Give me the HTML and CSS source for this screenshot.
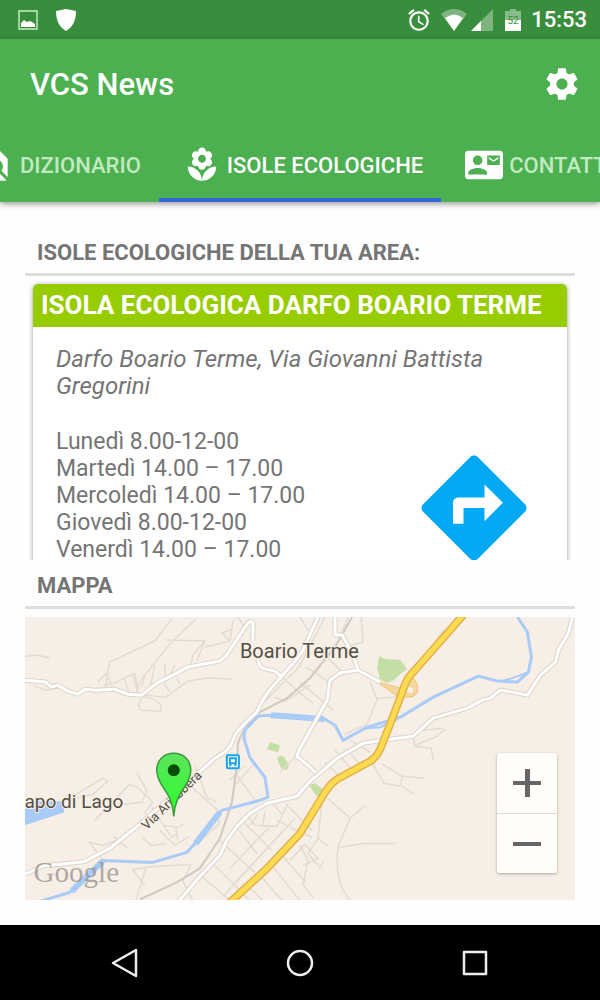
FILE: index.html
```html
<!DOCTYPE html>
<html lang="it">
<head>
    <meta charset="UTF-8">
    <meta name="viewport" content="width=device-width, initial-scale=1">
    <title>VCS News</title>
    <link rel="stylesheet" href="styles.css">
</head>
<body>
    <div class="status-bar">
        <svg class="status-icon" viewBox="0 0 22 22">
            <path d="M2 2h18v18H2z" fill="none" stroke="#c8f0c4" stroke-width="1.4"/>
            <path d="M4 18v-4l3-3 3 2 3-1 2 1 3 2v3z"/>
        </svg>
        <svg class="status-icon shield" viewBox="0 0 22 22">
            <path d="M11 0l10 2c0 9-3 16-10 20C4 18 1 11 1 2z"/>
        </svg>
        <span class="spacer"></span>
        <svg class="status-icon alarm" viewBox="0 0 24 24">
            <path d="M22 5.72l-4.6-3.86-1.29 1.53 4.6 3.86L22 5.72zM7.88 3.39L6.6 1.86 2 5.71l1.29 1.53 4.59-3.85zM12.5 8H11v6l4.75 2.85.75-1.23-4-2.37V8zM12 4c-4.97 0-9 4.03-9 9s4.02 9 9 9c4.97 0 9-4.03 9-9s-4.03-9-9-9zm0 16c-3.87 0-7-3.13-7-7s3.13-7 7-7 7 3.13 7 7-3.13 7-7 7z"/>
        </svg>
        <svg class="status-icon wifi" viewBox="0 0 26 22">
            <path d="M0 5Q13-5 26 5L13 22z" opacity=".35"/>
            <path d="M4 9Q13 2 22 9L13 22z"/>
        </svg>
        <svg class="status-icon" viewBox="0 0 22 22">
            <path d="M22 0v22H0z" opacity=".35"/>
            <path d="M10 12v10H0z"/>
        </svg>
        <svg class="status-icon battery" viewBox="0 0 16 22">
            <path d="M5 0h6v2h5v9H0V2h5z" opacity=".4"/>
            <path d="M0 11h16v11H0z"/>
            <text x="8" y="15" text-anchor="middle">52</text>
        </svg>
        <span class="clock">15:53</span>
    </div>

    <header class="toolbar">
        <div class="app-bar">
            <h1>VCS News</h1>
            <button class="settings" aria-label="Impostazioni">
                <svg viewBox="0 0 24 24">
                    <path d="M19.43 12.98c.04-.32.07-.64.07-.98s-.03-.66-.07-.98l2.11-1.65c.19-.15.24-.42.12-.64l-2-3.46c-.12-.22-.39-.3-.61-.22l-2.49 1c-.52-.4-1.08-.73-1.69-.98l-.38-2.65C14.46 2.18 14.25 2 14 2h-4c-.25 0-.46.18-.49.42l-.38 2.65c-.61.25-1.17.59-1.69.98l-2.49-1c-.23-.09-.49 0-.61.22l-2 3.46c-.13.22-.07.49.12.64l2.11 1.65c-.04.32-.07.65-.07.98s.03.66.07.98l-2.11 1.65c-.19.15-.24.42-.12.64l2 3.46c.12.22.39.3.61.22l2.49-1c.52.4 1.08.73 1.69.98l.38 2.65c.03.24.24.42.49.42h4c.25 0 .46-.18.49-.42l.38-2.65c.61-.25 1.17-.59 1.69-.98l2.49 1c.23.09.49 0 .61-.22l2-3.46c.12-.22.07-.49-.12-.64l-2.11-1.65zM12 15.5c-1.93 0-3.5-1.57-3.5-3.5s1.57-3.5 3.5-3.5 3.5 1.57 3.5 3.5-1.57 3.5-3.5 3.5z"/>
                </svg>
            </button>
        </div>
        <nav class="tabs">
            <a class="tab tab-prev" href="#dizionario">
                <svg viewBox="0 0 24 24">
                    <path d="M20 19.59V8l-6-6H6c-1.1 0-1.99.9-1.99 2L4 20c0 1.1.89 2 1.99 2H18c.45 0 .85-.15 1.19-.4l-4.43-4.43c-.8.52-1.74.83-2.76.83-2.76 0-5-2.24-5-5s2.24-5 5-5 5 2.24 5 5c0 1.02-.31 1.96-.83 2.75L20 19.59zM9 13c0 1.66 1.34 3 3 3s3-1.34 3-3-1.34-3-3-3-3 1.34-3 3z"/>
                </svg>
                <span>DIZIONARIO</span>
            </a>
            <a class="tab active" href="#isole">
                <svg viewBox="0 0 24 24">
                    <path d="M12 22c4.97 0 9-4.03 9-9-4.97 0-9 4.03-9 9zM5.6 10.25c0 1.38 1.12 2.5 2.5 2.5.53 0 1.01-.16 1.42-.44l-.02.19c0 1.38 1.12 2.5 2.5 2.5s2.5-1.12 2.5-2.5l-.02-.19c.4.28.89.44 1.42.44 1.38 0 2.5-1.12 2.5-2.5 0-1-.59-1.85-1.43-2.25.84-.4 1.43-1.25 1.43-2.25 0-1.38-1.12-2.5-2.5-2.5-.53 0-1.01.16-1.42.44l.02-.19C14.5 2.12 13.38 1 12 1S9.5 2.12 9.5 3.5l.02.19c-.4-.28-.89-.44-1.42-.44-1.38 0-2.5 1.12-2.5 2.5 0 1 .59 1.85 1.43 2.25-.84.4-1.43 1.25-1.43 2.25zM12 5.5c1.38 0 2.5 1.12 2.5 2.5s-1.12 2.5-2.5 2.5S9.5 9.38 9.5 8s1.12-2.5 2.5-2.5zM3 13c0 4.97 4.03 9 9 9 0-4.97-4.03-9-9-9z"/>
                </svg>
                <span>ISOLE ECOLOGICHE</span>
            </a>
            <a class="tab tab-next" href="#contatti">
                <svg viewBox="0 0 24 24">
                    <path d="M21 8V7l-3 2-3-2v1l3 2 3-2zm1-5H2C.9 3 0 3.9 0 5v14c0 1.1.9 2 2 2h20c1.1 0 1.99-.9 1.99-2L24 5c0-1.1-.9-2-2-2zM8 6c1.66 0 3 1.34 3 3s-1.34 3-3 3-3-1.34-3-3 1.34-3 3-3zm6 12H2v-1c0-2 4-3.1 6-3.1s6 1.1 6 3.1v1zm8-6h-8V6h8v6z"/>
                </svg>
                <span>CONTATTI</span>
            </a>
        </nav>
    </header>

    <main>
        <h2>ISOLE ECOLOGICHE DELLA TUA AREA:</h2>
        <section class="list">
            <article class="card">
                <h3>ISOLA ECOLOGICA DARFO BOARIO TERME</h3>
                <div class="card-body">
                    <address>Darfo Boario Terme, Via Giovanni Battista Gregorini</address>
                    <ul class="hours">
                        <li>Lunedì 8.00-12-00</li>
                        <li>Martedì 14.00 – 17.00</li>
                        <li>Mercoledì 14.00 – 17.00</li>
                        <li>Giovedì 8.00-12-00</li>
                        <li>Venerdì 14.00 – 17.00</li>
                    </ul>
                    <button class="directions" aria-label="Indicazioni">
                        <svg viewBox="0 0 24 24">
                            <path d="M21.71 11.29l-9-9c-.39-.39-1.02-.39-1.41 0l-9 9c-.39.39-.39 1.02 0 1.41l9 9c.39.39 1.02.39 1.41 0l9-9c.39-.38.39-1.01 0-1.41zM14 14.5V12h-4v3H8v-4c0-.55.45-1 1-1h5V7.5l3.5 3.5-3.5 3.5z"/>
                        </svg>
                    </button>
                </div>
            </article>
        </section>

        <h2>MAPPA</h2>
        <section class="map">
            <svg class="map-canvas" viewBox="25 617 550 283" preserveAspectRatio="xMidYMid slice">
                <defs>
                    <linearGradient id="pin" x1="0" y1="0" x2="0" y2="1">
                        <stop offset="0" stop-color="#5ee35e"/>
                        <stop offset="1" stop-color="#2bff2b"/>
                    </linearGradient>
                    <!-- main roads, stroked twice: casing then fill -->
                    <g id="roads">
                        <path d="M25 680l10 1 11 1 6 5 6-2 5 3 5 3 10 3 8-5 9 1 20-1 13 5 14 1 15-12 18-9 13-7 32-6 6-5 10-15 12-18q3-3 5 0v18M258 660q2 9 8 9l9 2 7 6"/>
                        <path d="M318 617l-15 33-7 10-15 17-13 15-8 13-3 7-11 10-10 11-5 12-6 7-10 6-10 9-65 57-30 24-25 13-25 3-15 1-20 9"/>
                        <path d="M335 617v18h7l10 18 6 17 22 12M358 670l-18 3-10 7-3 20-14 25-13 23-3 8 12 10 6 6"/>
                        <path d="M572 617l-4 16-10 17-3 12-15 13-13 20-15-3-12-2-10 8-8 2-15 8-34 10-20 18-30 4-20 3-26 15-22 19-5 4-13 15-30 7-17 10-13 13-10 14-7 15-20 21-23 27"/>
                    </g>
                    <path id="highway" d="M463 615l-50 57q-6 6-8 12l-15 40-8 20q-4 12-12 17l-33 18q-7 5-12 13l-25 41-33 35-37 34"/>
                </defs>
                <rect x="25" y="617" width="550" height="283" fill="#f7eee6"/>
                <g fill="#c3dfa5">
                    <path d="M379 656l6 3 15 1 7 9-7 5-6 6-8 3-6-4-3-11z"/>
                    <path d="M270 742l10 3-2 7-11-3zM277 758q4-5 8 0l4 7-2 5-6-2z"/>
                    <path d="M309 785l6-2 8 6-3 8-5-3z"/>
                </g>
                <path d="M25 810l8-9h29l3 11-40 13z" fill="#a9cbf8"/>
                <g class="minor">
                    <path d="M172 619l-17 22-45 21-5 28M196 619l-25 24-30 37-5 14M25 657q10-4 25 1M167 640l38 1-12 14-3 13M205 641l-8 20M205 647l25-6 3-20M230 641l-8-8 10-4M98 682l8-8 5 8-10 8M110 685l25-12 3 15M125 679l4 13M133 675l5 17M145 675l-3 12M155 665l-4 20M165 665v18M175 665l-5 10M136 694l30 3 22-16 20-3 24 1M142 698q-5 8-1 12l20 1q2-8-7-12l-12-3M165 684l5 8M177 678l3 6M35 686l12 4 12-2M238 617l7 11M300 617l8 13M325 617l-26 50-38 38M348 617l-10 25-36 45M361 617l2 25-13 4M280 675l20 18 13 10M300 682l33 28M306 667l26 17M320 650l23 23M275 697l10 4 25-16M370 682l7 17-10 25-23 10M377 698l18-1M413 738l2 8 16 2 2 12M415 745l20-8 10-8M422 730l20-2M433 645l8-12 12-9"/>
                    <path d="M75 795l28-17 5 3-15 13-15 4M95 820l35-36 8 3 15 15-9 12M137 772l10 18-5 12-18 2M152 807l20 30 5-4M160 830l15 15 14-9M165 825l11 2 2 12M175 828l10-5M167 843l-15 2-10-8M105 862l-15-20 14 3 20-8M128 848l-14-12M145 885l-12-16 20-3 38-2M136 900l10-32M191 865l-8 15 10 20M190 785l28 25 1 14-31 27M195 765l12 32 10 5M235 785l18-20M255 800l-20-28M245 765l-15 15M270 800l12 14M248 815l7 10 22 1 11-23M235 825l22 28M220 840l35 32M212 862l37 37M200 874l30 26M245 823l27 27M258 814l-8 11M265 811l-2 14M277 820l35 17M287 805l25 25M270 826l-40 42M282 832l-45 48M295 818l-72 78M300 752l-20 20M345 748l17 18M335 750l17 20M325 762l14 13M370 752l-20-12"/>
                    <path d="M372 763l12 20 16 3 2-10-20-12M402 776l22 2M402 786l12 8M328 798l22 20 15-13M350 818l-12 28q-3 25 4 42l8 12M338 847l26-4h31M322 800l-4 38 10 8M318 838l-10 15 12 14 4-6M312 837l-20-8M300 845l8 15-5 24 10 13M290 860l15-16 13 14-15 7M260 875l22 25M272 865l28 35M282 855l24 27M250 887l13 13"/>
                </g>
                <path d="M352 617l-17 30-25 31-23 20-27 14q-18 16-22 32l-1 21-5 37-12 36-20 30-23 14-37 17" fill="none" stroke="#d0c8c2" stroke-width="2"/>
                <path class="river" d="M517 617l10 15 4 25-3 15-11 10-20-1-19-5-45 21-33 20-33 10-24 13-8-15-10-6-25-2-33-2-9 1-13 14-1 8 6 19 2 3 13 17 3 20-8 3-38 10-20 25-15 17-34 10-50-2-23 23-10 9-30 9"/>
                <path class="river wide" d="M271 715l29 2 24 2M220 812l-18 23-6 8M103 861l-23 22-8 8"/>
                <path d="M528 672l-16 6-11 3M398 719l-18 8-14 1" fill="none" stroke="#a9cbf8" stroke-width="2"/>
                <path d="M376 681l28 8q2-11 9-11 6 7 4 14-4 6-10 5l-10-1z" fill="#f6d79b" stroke="#ecc384"/>
                <circle cx="410" cy="690" r="3" fill="#f7eee6"/>
                <use href="#roads" class="road-case"/>
                <use href="#roads" class="road-fill"/>
                <use href="#highway" class="highway-case"/>
                <use href="#highway" class="highway-fill"/>

                <rect x="227" y="755" width="12" height="13" rx="1" fill="#fff" stroke="#1ba3ea" stroke-width="2"/>
                <path d="M229 757h8v7h-1l1 2h-2l-1-2h-2l-1 2h-2l1-2h-1z" fill="#1ba3ea"/>
                <path d="M231 759h4v3h-4z" fill="#fff"/>

                <text class="place" x="240" y="658">Boario Terme</text>
                <text class="place" x="25" y="808">apo di Lago</text>
                <text class="street" transform="translate(147 830) rotate(-44)">Via Ariabbera</text>
                <text class="brand" x="34" y="882">Google</text>

                <path d="M174 816c-1-14-5-21-10-28-4-6-7-11-7-18 0-10 7-17 17-17s17 7 17 17c0 7-3 12-7 18-5 7-9 14-10 28z" fill="url(#pin)" stroke="#3b9a3b" stroke-width="1.5"/>
                <circle cx="174" cy="770" r="6" fill="#064d06"/>
            </svg>
            <div class="zoom">
                <button aria-label="Ingrandisci"><svg viewBox="0 0 28 28"><path d="M12 0h5v12h11v4H17v12h-5V16H0v-4h12z"/></svg></button>
                <button aria-label="Riduci"><svg viewBox="0 0 28 28"><path d="M0 12h28v4H0z"/></svg></button>
            </div>
        </section>
    </main>

    <footer class="nav-bar">
        <button aria-label="Indietro"><svg viewBox="0 0 30 30"><path d="M26 2v26L3 15z"/></svg></button>
        <button aria-label="Home"><svg viewBox="0 0 30 30"><circle cx="15" cy="15" r="12"/></svg></button>
        <button aria-label="Recenti"><svg viewBox="0 0 30 30"><path d="M4 4h22v22H4z"/></svg></button>
    </footer>
</body>
</html>
```
FILE: styles.css
```css
* {
    box-sizing: border-box;
}

body {
    margin: 0;
    height: 100vh;
    display: flex;
    flex-direction: column;
    overflow: hidden;
    background: #fefefe;
    color: #757575;
    font-family: Roboto, "Liberation Sans", sans-serif;
}

h1, h2, h3, ul {
    margin: 0;
    padding: 0;
}

button {
    padding: 0;
    border: 0;
    background: none;
    cursor: pointer;
}

svg {
    display: block;
}

/* system bars */
.status-bar {
    height: 39px;
    flex: none;
    display: flex;
    align-items: center;
    padding: 0 13px 0 17px;
    background: #388e3c;
    color: #fff;
}
.status-icon {
    width: 22px;
    height: 22px;
    fill: #fff;
}
.shield {
    margin-left: 16px;
}
.spacer {
    flex: 1;
}
.alarm {
    width: 26px;
    height: 26px;
}
.wifi {
    width: 26px;
    margin: 0 4px 0 9px;
}
.battery {
    width: 16px;
    margin: 0 10px 0 12px;
}
.battery text {
    font-size: 10px;
    fill: #388e3c;
}
.clock {
    font-size: 22px;
    font-weight: 500;
}

.nav-bar {
    height: 75px;
    flex: none;
    display: flex;
    justify-content: center;
    gap: 145px;
    background: #000;
}
.nav-bar svg {
    width: 30px;
    height: 30px;
    fill: none;
    stroke: #eee;
    stroke-width: 2.5;
    stroke-linejoin: round;
}

/* toolbar */
.toolbar {
    flex: none;
    background: #4caf50;
    color: #fff;
    box-shadow: 0 2px 6px rgba(0, 0, 0, 0.4);
}
.app-bar {
    height: 90px;
    display: flex;
    align-items: center;
    justify-content: space-between;
    padding: 0 19px 0 30px;
}
.app-bar h1 {
    font-size: 31px;
    font-weight: 500;
}
.settings svg {
    width: 38px;
    height: 38px;
    fill: #fff;
}
.tabs {
    height: 73px;
    display: grid;
    grid-template-columns: minmax(0, 1fr) auto minmax(0, 1fr);
    overflow: hidden;
}
.tab {
    display: flex;
    align-items: center;
    gap: 6px;
    padding: 3px 18px 0 24px;
    border-bottom: 4px solid transparent;
    color: #c2eac0;
    font-size: 22px;
    font-weight: 500;
    text-decoration: none;
    white-space: nowrap;
}
.tab svg {
    width: 38px;
    height: 38px;
    flex: none;
    fill: #fff;
}
.tab-prev {
    justify-self: end;
}
.tab-next {
    justify-self: start;
}
.tab.active {
    color: #fff;
    border-color: #3367d6;
}

/* content */
main {
    flex: 1;
    min-height: 0;
    display: flex;
    flex-direction: column;
    padding: 25px;
}
h2 {
    height: 49px;
    flex: none;
    padding: 0 12px;
    border-bottom: 3px solid #dedede;
    font-size: 22px;
    line-height: 52px;
    font-weight: 700;
}
.list {
    flex: 1 1 0;
    min-height: 0;
    overflow: hidden;
}
.card {
    margin: 8px;
    border-radius: 5px;
    background: #fff;
    box-shadow: 0 1px 5px rgba(0, 0, 0, 0.4);
}
.card h3 {
    padding: 0 8px;
    border-radius: 5px 5px 0 0;
    background: #97cc00;
    color: #fff;
    font-size: 26px;
    line-height: 43px;
    font-weight: 700;
    white-space: nowrap;
}
.card-body {
    display: grid;
    grid-template-columns: 1fr auto;
    padding: 19px 30px 24px 23px;
    font-size: 23px;
    line-height: 27px;
}
.card-body address {
    grid-column: 1 / -1;
    margin-bottom: 28px;
    font-size: 24px;
}
.hours {
    padding-bottom: 8px;
    list-style: none;
}
.directions {
    align-self: end;
}
.directions svg {
    width: 126px;
    height: 126px;
    fill: #03a9f4;
}

/* map */
.map {
    position: relative;
    flex: 1 1 0;
    min-height: 0;
    margin-top: 8px;
}
.map-canvas {
    width: 100%;
    height: 100%;
}
.minor {
    fill: none;
    stroke: #e3dbd3;
    stroke-width: 1.5;
}
.river {
    fill: none;
    stroke: #a9cbf8;
    stroke-width: 3;
    stroke-linejoin: round;
}
.river.wide {
    stroke-width: 6;
}
.road-case, .road-fill, .highway-case, .highway-fill {
    fill: none;
    stroke-linejoin: round;
}
.road-case {
    stroke: #dcd3cb;
    stroke-width: 5;
}
.road-fill {
    stroke: #fff;
    stroke-width: 3;
}
.highway-case {
    stroke: #e3b04b;
    stroke-width: 8;
}
.highway-fill {
    stroke: #fbdc51;
    stroke-width: 5;
}
.place, .street {
    fill: #544f43;
    stroke: #f7eee6;
    stroke-width: 2;
    paint-order: stroke;
}
.place {
    font-size: 20px;
}
.place + .place {
    font-size: 19px;
}
.street {
    font-size: 13px;
}
.brand {
    fill: #8f8984;
    fill-opacity: 0.7;
    font-family: "Liberation Serif", serif;
    font-size: 29px;
}
.zoom {
    position: absolute;
    right: 18px;
    bottom: 27px;
    width: 60px;
    background: #fffcf9;
    border-radius: 2px;
    box-shadow: 0 1px 3px rgba(0, 0, 0, 0.3);
}
.zoom button {
    width: 100%;
    height: 60px;
    display: grid;
    place-items: center;
}
.zoom button + button {
    border-top: 1px solid #e0dcd8;
}
.zoom svg {
    width: 28px;
    height: 28px;
    fill: #666;
}
```
